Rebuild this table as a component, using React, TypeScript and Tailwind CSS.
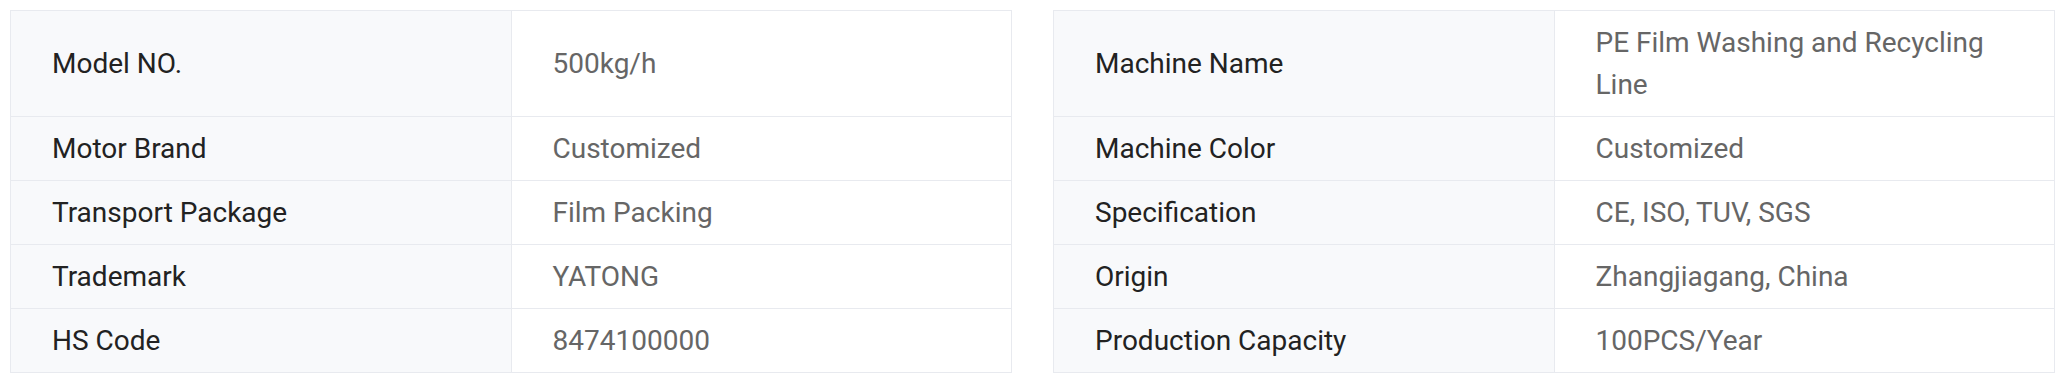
const left = [
  ['Model NO.', '500kg/h'],
  ['Motor Brand', 'Customized'],
  ['Transport Package', 'Film Packing'],
  ['Trademark', 'YATONG'],
  ['HS Code', '8474100000'],
];

const right = [
  ['Machine Name', 'PE Film Washing and Recycling Line'],
  ['Machine Color', 'Customized'],
  ['Specification', 'CE, ISO, TUV, SGS'],
  ['Origin', 'Zhangjiagang, China'],
  ['Production Capacity', '100PCS/Year'],
];

function SpecTable({ rows }: { rows: string[][] }) {
  return (
    <table className="flex-1 border-collapse border border-[#e8eaef] table-fixed">
      <tbody>
        {rows.map(([label, value], i) => (
          <tr key={label} className={i === 0 ? 'h-[106px]' : ''}>
            <td className="w-1/2 border border-[#e8eaef] bg-[#f8f9fb] px-[41px] py-[10.5px] text-[28px] leading-[42px] text-[#222222] align-middle">
              {label}
            </td>
            <td className="w-1/2 border border-[#e8eaef] bg-white pl-[41px] pr-[24px] py-[10.5px] text-[28px] leading-[42px] text-[#666666] align-middle">
              {value}
            </td>
          </tr>
        ))}
      </tbody>
    </table>
  );
}

export default function App() {
  return (
    <div
      className="w-[2056px] h-[382px] bg-white pl-[10px] pr-[1px] pt-[10px] flex items-start gap-[41px]"
      style={{ fontFamily: 'Roboto, "Liberation Sans", sans-serif' }}
    >
      <SpecTable rows={left} />
      <SpecTable rows={right} />
    </div>
  );
}
